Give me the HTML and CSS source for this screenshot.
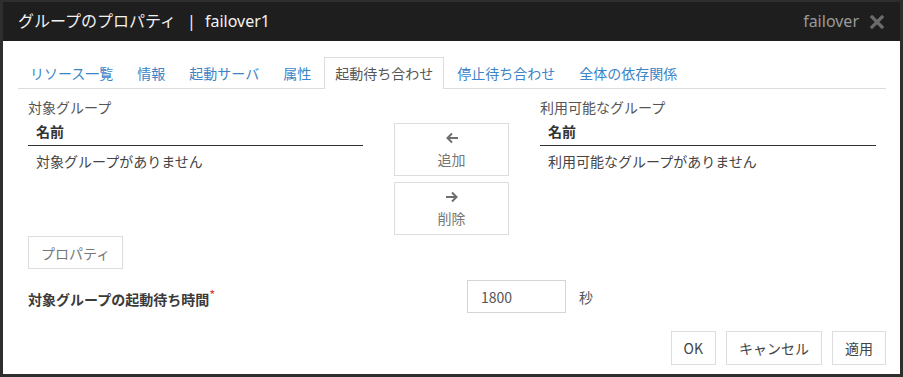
FILE: index.html
```html
<!DOCTYPE html>
<html lang="ja">

<head>
    <meta charset="utf-8">
    <title>グループのプロパティ</title>
    <link rel="stylesheet" href="styles.css">
</head>

<body>
    <div class="dialog">
        <div class="dialog__header">
            <h1 class="dialog__title">グループのプロパティ<span class="dialog__sep">|</span>failover1</h1>
            <div class="dialog__tools">
                <span class="dialog__server">failover</span>
                <button class="dialog__close" type="button" aria-label="閉じる">
                    <svg width="14" height="14" viewBox="0 0 14 14">
                        <path d="M2 2 L12 12 M12 2 L2 12" stroke="#6b6b6b" stroke-width="3.2" stroke-linecap="square" />
                    </svg>
                </button>
            </div>
        </div>

        <div class="dialog__body">
            <ul class="tabs">
                <li class="tabs__item"><a class="tabs__link" href="#">リソース一覧</a></li>
                <li class="tabs__item"><a class="tabs__link" href="#">情報</a></li>
                <li class="tabs__item"><a class="tabs__link" href="#">起動サーバ</a></li>
                <li class="tabs__item"><a class="tabs__link" href="#">属性</a></li>
                <li class="tabs__item tabs__item--active"><a class="tabs__link" href="#">起動待ち合わせ</a></li>
                <li class="tabs__item"><a class="tabs__link" href="#">停止待ち合わせ</a></li>
                <li class="tabs__item"><a class="tabs__link" href="#">全体の依存関係</a></li>
            </ul>

            <div class="pane">
                <div class="lists">
                    <div class="list">
                        <div class="list__label">対象グループ</div>
                        <table class="list__table">
                            <thead>
                                <tr><th>名前</th></tr>
                            </thead>
                            <tbody>
                                <tr><td>対象グループがありません</td></tr>
                            </tbody>
                        </table>
                    </div>

                    <div class="movers">
                        <button class="mover" type="button">
                            <svg class="mover__icon" width="14" height="12" viewBox="0 0 14 12">
                                <path d="M13 6 H2.5 M7 1.5 L2.5 6 L7 10.5" fill="none" stroke="#6e6e6e" stroke-width="2" />
                            </svg>
                            <span class="mover__text">追加</span>
                        </button>
                        <button class="mover" type="button">
                            <svg class="mover__icon" width="14" height="12" viewBox="0 0 14 12">
                                <path d="M1 6 H11.5 M7 1.5 L11.5 6 L7 10.5" fill="none" stroke="#6e6e6e" stroke-width="2" />
                            </svg>
                            <span class="mover__text">削除</span>
                        </button>
                    </div>

                    <div class="list">
                        <div class="list__label">利用可能なグループ</div>
                        <table class="list__table">
                            <thead>
                                <tr><th>名前</th></tr>
                            </thead>
                            <tbody>
                                <tr><td>利用可能なグループがありません</td></tr>
                            </tbody>
                        </table>
                    </div>
                </div>

                <button class="btn btn--props" type="button">プロパティ</button>

                <div class="field">
                    <label class="field__label" for="waitTime">対象グループの起動待ち時間<span class="field__required">*</span></label>
                    <input class="field__input" id="waitTime" type="text" value="1800">
                    <span class="field__unit">秒</span>
                </div>
            </div>

            <div class="dialog__footer">
                <button class="btn" type="button">OK</button>
                <button class="btn" type="button">キャンセル</button>
                <button class="btn" type="button">適用</button>
            </div>
        </div>
    </div>
</body>

</html>
```

FILE: styles.css
```css
body {
    margin: 0;
    padding: 2px 3px 3px 3px;
    background: #2e2e2e;
    font-family: "Noto Sans CJK JP", "Noto Sans", sans-serif;
    font-size: 14px;
    color: #444444;
}

.dialog {
    background: #ffffff;
}

.dialog__header {
    height: 39px;
    display: flex;
    align-items: center;
    justify-content: space-between;
    padding: 0 15px;
    background: #1e1e1e;
}

.dialog__title {
    margin: 0;
    margin-top: -2px;
    font-family: "Noto Sans", "Noto Sans CJK JP", sans-serif;
    font-size: 16px;
    font-weight: normal;
    line-height: 22px;
    color: #f2f2f2;
}

.dialog__sep {
    margin: 0 9px 0 11px;
}

.dialog__tools {
    display: flex;
    align-items: center;
    gap: 11px;
    padding-right: 1px;
}

.dialog__server {
    margin-top: -2px;
    font-family: "Noto Sans", sans-serif;
    font-size: 16px;
    color: #9a9a9a;
}

.dialog__close {
    display: flex;
    padding: 0;
    border: none;
    background: none;
    cursor: pointer;
}

.dialog__body {
    padding: 16px 14px 9px 15px;
}

/* tabs */

.tabs {
    display: flex;
    margin: 0;
    padding: 0 0 0 1px;
    list-style: none;
    border-bottom: 1px solid #dddddd;
}

.tabs__item {
    margin-right: 2px;
    margin-bottom: -1px;
}

.tabs__link {
    display: block;
    height: 30px;
    line-height: 30px;
    padding: 0 10px;
    border: 1px solid transparent;
    border-bottom: none;
    color: #3b84c6;
    text-decoration: none;
    white-space: nowrap;
}

.tabs__item--active .tabs__link {
    height: 31px;
    border-color: #dddddd;
    background: #ffffff;
    color: #555555;
}

/* pane */

.pane {
    padding: 8px 9px 0 10px;
}

.lists {
    display: grid;
    grid-template-columns: 335px 115px 336px;
    column-gap: 31px;
    align-items: start;
}

.list__label {
    line-height: 20px;
    color: #555555;
}

.list__table {
    width: 100%;
    border-collapse: collapse;
}

.list__table th {
    text-align: left;
    padding: 4px 8px;
    line-height: 20px;
    font-weight: bold;
    color: #333333;
    border-bottom: 1px solid #333333;
}

.list__table td {
    padding: 5px 8px;
    line-height: 20px;
    color: #444444;
}

.movers {
    display: flex;
    flex-direction: column;
    gap: 6px;
    margin-top: 26px;
}

.mover {
    display: flex;
    flex-direction: column;
    align-items: center;
    height: 53px;
    padding: 8px 0 0;
    border: 1px solid #dddddd;
    background: #ffffff;
    font: inherit;
    color: #777777;
    cursor: pointer;
}

.mover__icon {
    display: block;
}

.mover__text {
    margin-top: 5px;
    line-height: 20px;
}

/* buttons */

.btn {
    height: 34px;
    padding: 0 12px;
    border: 1px solid #dddddd;
    background: #ffffff;
    font: inherit;
    color: #444444;
    cursor: pointer;
}

.btn--props {
    display: block;
    height: 33px;
    margin-top: 1px;
    color: #777777;
}

/* field */

.field {
    display: flex;
    align-items: center;
    margin-top: 11px;
}

.field__label {
    width: 439px;
    font-weight: bold;
    color: #3a3a3a;
}

.field__required {
    font-size: 13px;
    font-weight: normal;
    vertical-align: 5px;
    color: #d9412e;
}

.field__input {
    width: 99px;
    height: 33px;
    box-sizing: border-box;
    padding: 0 13px;
    border: 1px solid #d5d5d5;
    font: inherit;
    color: #555555;
    outline: none;
}

.field__unit {
    margin-left: 13px;
    color: #555555;
}

.dialog__footer {
    display: flex;
    justify-content: flex-end;
    gap: 10px;
    margin-top: 18px;
}
```
